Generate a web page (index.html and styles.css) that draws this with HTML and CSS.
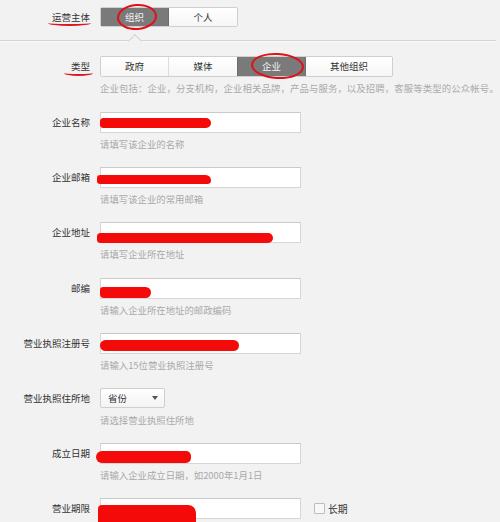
FILE: index.html
```html
<!DOCTYPE html>
<html lang="zh-CN">
<head>
<meta charset="utf-8">
<title>运营主体</title>
<link rel="stylesheet" href="styles.css">
</head>
<body>
<div class="page">
  <div class="row top">
    <div class="lbl"><span class="txt">运营主体<i class="uline u1"></i></span></div>
    <div class="seg">
      <span class="btn on w67">组织<i class="ring r1"></i></span><span class="btn w69">个人</span>
    </div>
  </div>
  <div class="divider"><span class="notch"></span></div>
  <div class="row type">
    <div class="lbl"><span class="txt">类型<i class="uline u2"></i></span></div>
    <div class="seg seg21">
      <span class="btn w67">政府</span><span class="btn w69">媒体</span><span class="btn on w68">企业<i class="ring r2"></i></span><span class="btn w87">其他组织</span>
    </div>
  </div>
  <div class="desc">企业包括：企业，分支机构，企业相关品牌，产品与服务，以及招聘，客服等类型的公众帐号。</div>

  <div class="field">
    <div class="lbl">企业名称</div>
    <div class="ctl">
      <div class="input"><span class="mark m1"></span></div>
      <div class="hint">请填写该企业的名称</div>
    </div>
  </div>
  <div class="field">
    <div class="lbl">企业邮箱</div>
    <div class="ctl">
      <div class="input"><span class="mark m2"></span></div>
      <div class="hint">请填写该企业的常用邮箱</div>
    </div>
  </div>
  <div class="field">
    <div class="lbl">企业地址</div>
    <div class="ctl">
      <div class="input"><span class="mark m3"></span></div>
      <div class="hint">请填写企业所在地址</div>
    </div>
  </div>
  <div class="field">
    <div class="lbl">邮编</div>
    <div class="ctl">
      <div class="input"><span class="mark m4"></span></div>
      <div class="hint">请输入企业所在地址的邮政编码</div>
    </div>
  </div>
  <div class="field">
    <div class="lbl">营业执照注册号</div>
    <div class="ctl">
      <div class="input"><span class="mark m5"></span></div>
      <div class="hint">请输入15位营业执照注册号</div>
    </div>
  </div>
  <div class="field">
    <div class="lbl">营业执照住所地</div>
    <div class="ctl">
      <div class="select"><span>省份</span><span class="arrow"></span></div>
      <div class="hint">请选择营业执照住所地</div>
    </div>
  </div>
  <div class="field">
    <div class="lbl">成立日期</div>
    <div class="ctl">
      <div class="input"><span class="mark m6"></span></div>
      <div class="hint">请输入企业成立日期，如2000年1月1日</div>
    </div>
  </div>
  <div class="field">
    <div class="lbl">营业期限</div>
    <div class="ctl">
      <div class="inline">
        <div class="input"><span class="mark m7"></span></div>
        <span class="check"></span><span class="checklbl">长期</span>
      </div>
    </div>
  </div>
</div>
</body>
</html>
```

FILE: styles.css
```css
html, body {
  margin: 0;
  padding: 0;
  background: #f2f2f2;
}
body {
  font-family: "Noto Sans CJK SC", "Noto Sans", "Liberation Sans", sans-serif;
  color: #333;
  font-size: 9.5px;
  overflow: hidden;
  height: 522px;
}
.page {
  padding-top: 7px;
}
.row, .field {
  display: flex;
  align-items: flex-start;
}
.lbl {
  width: 91px;
  flex: none;
  box-sizing: border-box;
  padding-right: 1px;
  margin-right: 9px;
  text-align: right;
  line-height: 20px;
  font-size: 9.5px;
  color: #333;
  white-space: nowrap;
}
.type .lbl { line-height: 21px; }
.txt { position: relative; display: inline-block; }
.uline {
  position: absolute;
  border-bottom: 2px solid #e0141e;
  border-radius: 0 0 50% 50% / 0 0 3px 3px;
  height: 2px;
}
.u1 { left: -4px; right: -1px; top: 15px; }
.u2 { left: -7px; right: -3px; top: 16px; }

.seg {
  display: flex;
  border: 1px solid #cfcfcf;
  border-radius: 2px;
  background: #fff;
  height: 20px;
  box-sizing: border-box;
}
.seg21 { height: 21px; }
.btn {
  position: relative;
  display: block;
  text-align: center;
  font-size: 9.5px;
  color: #333;
  line-height: 18px;
  box-sizing: border-box;
  border-left: 1px solid #dcdcdc;
  background: linear-gradient(#ffffff, #f6f6f6);
}
.seg21 .btn { line-height: 19px; }
.btn:first-child { border-left: none; }
.btn.on {
  background: #7a7a7a;
  color: #f4f4f4;
  border-left-color: #6e6e6e;
}
.btn.on + .btn { border-left-color: #6e6e6e; }
.w67 { width: 67px; }
.w69 { width: 69px; }
.w68 { width: 68px; }
.w87 { width: 87px; }

.ring {
  position: absolute;
  border: 2px solid #e01018;
  border-radius: 50%;
  box-sizing: border-box;
}
.r1 { left: 16px; top: -4px; width: 40px; height: 26px; transform: rotate(-4deg); }
.r2 { left: 13px; top: -4px; width: 53px; height: 26px; transform: rotate(3deg); }

.divider {
  position: relative;
  margin-top: 13px;
  height: 0;
  border-top: 1px solid #d3d3d3;
  border-bottom: 1px solid #fbfbfb;
  margin-right: 4px;
}
.notch {
  position: absolute;
  left: 130px;
  top: -5px;
  width: 9px;
  height: 9px;
  background: #f2f2f2;
  border-left: 1px solid #d3d3d3;
  border-top: 1px solid #d3d3d3;
  transform: rotate(45deg);
}
.type { margin-top: 14px; }
.desc {
  margin-top: 5px;
  padding-left: 100px;
  line-height: 12px;
  font-size: 9.4px;
  color: #aaa;
  white-space: nowrap;
  letter-spacing: 0.12px;
}
.field {
  margin-bottom: 17.2px;
}
.desc + .field { margin-top: 18px; }
.field .lbl { line-height: 21px; }
.ctl { display: flex; flex-direction: column; }
.input {
  position: relative;
  width: 201px;
  height: 21px;
  box-sizing: border-box;
  background: #fff;
  border: 1px solid #d6d6d6;
  border-top-color: #cacaca;
}
.hint {
  margin-top: 5px;
  line-height: 12px;
  font-size: 9.4px;
  color: #a9a9a9;
  white-space: nowrap;
}
.mark {
  position: absolute;
  background: #f50a0a;
  border-radius: 6px;
}
.m1 { left: -1px; top: 5px; width: 111px; height: 10px; border-radius: 5px 7px 7px 5px; }
.m2 { left: -4px; top: 7px; width: 114px; height: 9px; border-radius: 5px 8px 6px 5px; }
.m3 { left: -4px; top: 10px; width: 176px; height: 10px; border-radius: 5px 7px 7px 5px; }
.m4 { left: -1px; top: 8px; width: 51px; height: 11px; border-radius: 4px 7px 7px 5px; }
.m5 { left: -1px; top: 6px; width: 139px; height: 11px; border-radius: 6px; }
.m6 { left: -5px; top: 7px; width: 95px; height: 12px; border-radius: 6px 5px 5px 6px; }
.m7 { left: -3px; top: 6px; width: 98px; height: 20px; border-radius: 4px 8px 0 0; }

.select {
  display: flex;
  align-items: center;
  justify-content: space-between;
  width: 65px;
  height: 20px;
  margin-bottom: 1px;
  box-sizing: border-box;
  padding: 0 6px 0 7px;
  border: 1px solid #cfcfcf;
  border-radius: 2px;
  background: linear-gradient(#ffffff, #f3f3f3);
  font-size: 9.5px;
  color: #333;
}
.arrow {
  width: 0;
  height: 0;
  border-left: 3.5px solid transparent;
  border-right: 3.5px solid transparent;
  border-top: 4px solid #555;
}
.inline {
  display: flex;
  align-items: center;
}
.check {
  margin-left: 13px;
  width: 11px;
  height: 11px;
  box-sizing: border-box;
  border: 1px solid #bdbdbd;
  background: #f8f8f8;
  border-radius: 1px;
}
.checklbl {
  margin-left: 3px;
  font-size: 9.8px;
  color: #333;
}
```
